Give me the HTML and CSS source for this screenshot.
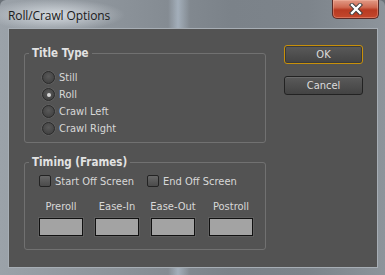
FILE: index.html
```html
<!DOCTYPE html>
<html lang="en">
<head>
  <meta charset="UTF-8">
  <title>Roll/Crawl Options</title>
  <link rel="stylesheet" href="styles.css">
</head>
<body>
  <div class="window">
    <!-- Title bar -->
    <div class="titlebar">
      <span class="title">Roll/Crawl Options</span>
      <div class="close">
        <svg width="18" height="12" viewBox="0 0 18 12">
          <path d="M5 2 L13 10 M13 2 L5 10" stroke="#3a3a3a" stroke-width="4.2" stroke-linecap="square"/>
          <path d="M5 2 L13 10 M13 2 L5 10" stroke="#fff" stroke-width="2.4" stroke-linecap="square"/>
        </svg>
      </div>
    </div>

    <!-- Client area -->
    <div class="client">
      <div class="groups">
        <fieldset class="group title-type">
          <legend>Title Type</legend>
          <div class="radio-row"><span class="radio"></span>Still</div>
          <div class="radio-row"><span class="radio checked"></span>Roll</div>
          <div class="radio-row"><span class="radio"></span>Crawl Left</div>
          <div class="radio-row"><span class="radio"></span>Crawl Right</div>
        </fieldset>

        <fieldset class="group timing">
          <legend>Timing (Frames)</legend>
          <div class="check-row">
            <span class="check-item"><span class="checkbox"></span>Start Off Screen</span>
            <span class="check-item"><span class="checkbox"></span>End Off Screen</span>
          </div>
          <div class="frames">
            <div class="frame-field"><span class="frame-label">Preroll</span><span class="frame-input"></span></div>
            <div class="frame-field"><span class="frame-label">Ease-In</span><span class="frame-input"></span></div>
            <div class="frame-field"><span class="frame-label">Ease-Out</span><span class="frame-input"></span></div>
            <div class="frame-field last"><span class="frame-label">Postroll</span><span class="frame-input"></span></div>
          </div>
        </fieldset>
      </div>

      <div class="buttons">
        <button class="btn default">OK</button>
        <button class="btn">Cancel</button>
      </div>
    </div>
  </div>
</body>
</html>
```

FILE: styles.css
```css
/* Window frame */
body {
  margin: 0;
  background: #6b7279;
}

.window {
  width: 385px;
  height: 275px;
  box-sizing: border-box;
  padding: 0 7px 7px 8px;
  display: flex;
  flex-direction: column;
  border-radius: 6px 6px 0 0;
  background:
    radial-gradient(ellipse 70px 16px at 55px 15px, rgba(235, 240, 245, 0.75), rgba(235, 240, 245, 0) 100%),
    linear-gradient(90deg, rgba(255,255,255,0) 168px, rgba(190, 205, 220, 0.55) 178px, rgba(255,255,255,0) 190px),
    linear-gradient(90deg, #9ba2a9 0%, #8c939a 30%, #7b8289 60%, #7d848b 80%, #8d949b 100%);
}

/* Title bar */
.titlebar {
  height: 28px;
  display: flex;
  justify-content: space-between;
  align-items: flex-start;
}

.title {
  font-family: "Open Sans", sans-serif;
  font-size: 12px;
  color: #1a1a1a;
  margin-top: 7px;
  letter-spacing: -0.1px;
}

.close {
  width: 47px;
  height: 19px;
  box-sizing: border-box;
  margin-right: -1px;
  border: 1px solid #5b2a26;
  border-top: none;
  border-radius: 0 0 5px 5px;
  background: linear-gradient(#e29a86 0%, #d06a52 40%, #b83a22 55%, #c4472c 100%);
  box-shadow: inset 0 0 0 1px rgba(255, 200, 180, 0.35);
  display: flex;
  justify-content: center;
  align-items: center;
}

/* Client area */
.client {
  flex: 1;
  display: flex;
  background: #535353;
  border: 1px solid #a7aeb5;
  padding: 18px 14px 0 15px;
  font-family: "DejaVu Sans Condensed", "DejaVu Sans", sans-serif;
  font-size: 11px;
  color: #d8d8d8;
  white-space: nowrap;
}

.groups {
  width: 242px;
}

/* Group boxes */
.group {
  margin: 0;
  border: 1px solid #717171;
  border-radius: 3px;
  min-width: 0;
}

.group legend {
  font-family: "DejaVu Sans Condensed", "DejaVu Sans", sans-serif;
  font-weight: bold;
  font-size: 11.5px;
  line-height: 12px;
  color: #e2e2e2;
  padding: 0 3px;
}

.title-type {
  padding: 10px 0 5px 17px;
}

.title-type legend {
  margin-left: -13px;
}

.radio-row {
  height: 17px;
  display: flex;
  align-items: center;
}

.radio {
  width: 13px;
  height: 13px;
  box-sizing: border-box;
  border-radius: 50%;
  border: 1px solid #2b2b2b;
  background: radial-gradient(circle at 50% 40%, #5a5a5a, #444 70%);
  box-shadow: 0 0 0 0.5px #6a6a6a;
  margin-right: 4px;
  display: flex;
  justify-content: center;
  align-items: center;
}

.radio.checked::after {
  content: "";
  width: 4px;
  height: 4px;
  border-radius: 50%;
  background: #d8d8d8;
}

.timing {
  margin-top: 13px;
  padding: 6px 0 13px 14px;
}

.timing legend {
  margin-left: -10px;
}

.check-row {
  height: 14px;
  display: flex;
  align-items: center;
}

.check-item {
  display: flex;
  align-items: center;
  margin-right: 13px;
}

.checkbox {
  width: 12px;
  height: 12px;
  box-sizing: border-box;
  border: 1px solid #232323;
  border-radius: 2px;
  background: linear-gradient(#676767, #4b4b4b);
  margin-right: 4px;
}

.frames {
  display: flex;
  gap: 12px;
  margin-top: 12px;
}

.frame-field {
  width: 44px;
  display: flex;
  flex-direction: column;
  align-items: center;
}

.frame-field.last {
  margin-left: 2px;
}

.frame-label {
  line-height: 14px;
}

.frame-input {
  width: 44px;
  height: 18px;
  box-sizing: border-box;
  margin-top: 4px;
  background: #a3a3a3;
  border: 1px solid #111;
  box-shadow: 0 0 0 1px #5e5e5e;
}

/* Buttons */
.buttons {
  margin-left: 18px;
  display: flex;
  flex-direction: column;
  gap: 12px;
  margin-top: -2px;
}

.btn {
  width: 79px;
  height: 19px;
  padding: 0;
  font-family: "DejaVu Sans Condensed", "DejaVu Sans", sans-serif;
  font-size: 11px;
  color: #dcdcdc;
  background: linear-gradient(#5a5a5a, #434343);
  border: 1px solid #222;
  border-radius: 3px;
  box-shadow: inset 0 1px 0 #6a6a6a;
}

.btn.default {
  border-color: #c8900a;
  box-shadow: inset 0 0 0 1px #3a3a3a;
}
```
